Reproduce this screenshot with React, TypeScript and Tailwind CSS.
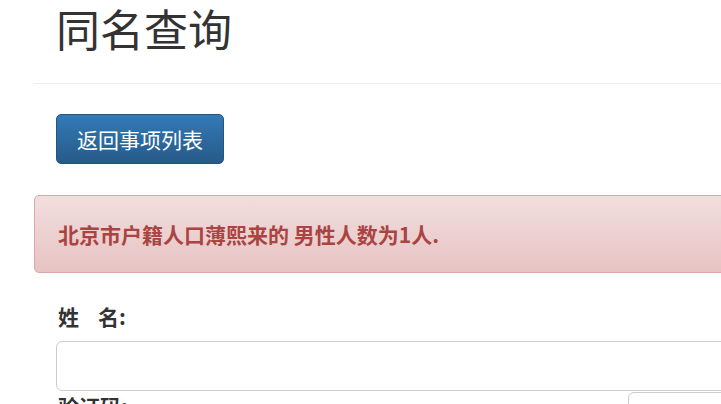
import React from "react";

export default function App() {
  const font = { fontFamily: '"Noto Sans CJK SC", "Liberation Sans", sans-serif' };
  return (
    <div className="w-[721px] h-[404px] overflow-hidden bg-white text-[#333]" style={font}>
      <div className="ml-[34px] w-[1100px]">
        <div className="pl-[22px] pt-[1px]">
          <h1 className="text-[44px] leading-[54px] font-normal text-[#333]">同名查询</h1>
        </div>
        <div className="mt-[28px] border-t border-[#eee]" />
        <div className="pl-[22px] pt-[30px]">
          <button className="h-[50px] px-[20px] rounded-[5px] border border-[#245580] bg-gradient-to-b from-[#337ab7] to-[#265a88] text-white text-[21px] leading-[30px]">
            返回事项列表
          </button>
        </div>
        <div className="mt-[31px] h-[78px] rounded-[5px] border border-[#dca7a7] bg-gradient-to-b from-[#f2dede] to-[#e7c3c3] px-[23px] flex items-center">
          <span className="text-[21px] leading-[30px] font-bold text-[#a94442]">北京市户籍人口薄熙来的 男性人数为1人.</span>
        </div>
        <div className="pl-[22px] pt-[28px]">
          <div className="pl-[2px] text-[21px] leading-[30px] font-bold text-[#333]">
            姓<span className="ml-[19px]">名:</span>
          </div>
          <div className="mt-[10px] h-[50px] w-[1000px] rounded-[6px] border border-[#ccc] bg-white" />
          <div className="flex">
            <div className="pl-[2px] text-[21px] leading-[30px] font-bold text-[#333] w-[572px]">验证码:</div>
            <div className="mt-[1px] h-[50px] w-[400px] rounded-[6px] border border-[#ccc] bg-white" />
          </div>
        </div>
      </div>
    </div>
  );
}
